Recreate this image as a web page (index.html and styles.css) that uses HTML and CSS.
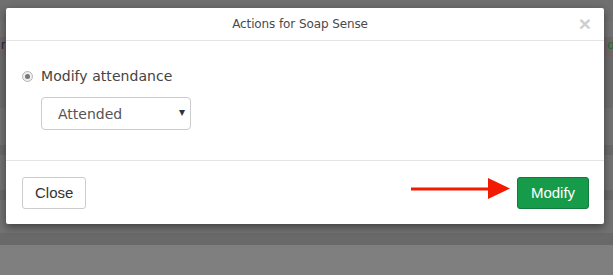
FILE: index.html
```html
<!DOCTYPE html>
<html>
<head>
<meta charset="utf-8">
<link rel="stylesheet" href="styles.css">
</head>
<body>
<div class="page">
  <div class="band b1"></div>
  <div class="band b2"></div>
  <div class="band b3"><span class="cut-l">r</span><span class="cut-r">o</span></div>
  <div class="band b4"></div>
  <div class="band b5"></div>
  <div class="band b6"></div>
  <div class="band b5 h35"></div>
  <div class="band b6"></div>
  <div class="band b5 h33"></div>
  <div class="band b6 h12"></div>
  <div class="band b7"></div>
</div>

<div class="modal">
  <div class="modal-header">
    <span class="modal-title">Actions for Soap Sense</span>
    <span class="close-x">×</span>
  </div>
  <div class="modal-body">
    <label class="radio-row">
      <span class="radio"><span class="dot"></span></span>
      <span class="radio-label">Modify attendance</span>
    </label>
    <div class="select">
      <span>Attended</span>
      <span class="caret">▾</span>
    </div>
  </div>
  <div class="modal-footer">
    <button class="btn btn-default">Close</button>
    <svg class="arrow" width="100" height="22" viewBox="0 0 100 22">
      <rect x="0" y="9.5" width="80" height="3" fill="#f21a00"/>
      <polygon points="77,0 99,10.5 77,21" fill="#f21a00"/>
    </svg>
    <button class="btn btn-success">Modify</button>
  </div>
</div>
</body>
</html>
```
FILE: styles.css
```css
html, body {
  margin: 0;
  padding: 0;
}
body {
  width: 613px;
  height: 275px;
  overflow: hidden;
  position: relative;
  font-family: "DejaVu Sans", "Noto Sans", sans-serif;
}
.page {
  display: flex;
  flex-direction: column;
  height: 275px;
}
.band { flex: none; }
.b1 { height: 21px; background: #6f6f6f; }
.b2 { height: 16px; background: #727272; }
.b3 {
  height: 20px;
  background: #716767;
  display: flex;
  justify-content: space-between;
  align-items: center;
  font-family: "Liberation Sans", sans-serif;
  font-size: 13px;
  line-height: 20px;
}
.cut-l { color: #1c2a44; margin-left: 1px; margin-top: -4px; }
.cut-r { color: #1d6b35; margin-right: -1px; margin-top: -4px; font-size: 12px; }
.b4 { height: 51px; background: #6c6c6c; }
.b5 { height: 37px; background: #727272; }
.b6 { height: 10px; background: #696969; }
.h35 { height: 35px; }
.h33 { height: 33px; }
.h12 { height: 12px; }
.b7 { flex: 1; background: #7f7f7f; }

.modal {
  position: absolute;
  left: 6px;
  top: 8px;
  width: 598px;
  height: 216px;
  background: #fff;
  border-radius: 2px;
  box-shadow: 0 3px 9px rgba(0, 0, 0, 0.45);
  display: flex;
  flex-direction: column;
}
.modal-header {
  height: 32px;
  border-bottom: 1px solid #e5e5e5;
  display: flex;
  align-items: center;
  justify-content: center;
  position: relative;
}
.modal-title {
  font-size: 12px;
  color: #4a4a4a;
  letter-spacing: -0.1px;
  margin-left: -10px;
}
.close-x {
  position: absolute;
  right: 13px;
  top: 5px;
  font-family: "Liberation Sans", sans-serif;
  font-size: 21px;
  font-weight: bold;
  color: #cfcfcf;
  line-height: 21px;
}
.modal-body {
  height: 119px;
  box-sizing: border-box;
  padding: 24px 0 0 16px;
  display: flex;
  flex-direction: column;
  align-items: flex-start;
}
.radio-row {
  display: flex;
  align-items: center;
  gap: 8px;
  height: 22px;
}
.radio {
  width: 11px;
  height: 11px;
  box-sizing: border-box;
  border: 1px solid #b5b5b5;
  border-radius: 50%;
  background: #eee;
  display: flex;
  align-items: center;
  justify-content: center;
}
.dot {
  width: 5px;
  height: 5px;
  border-radius: 50%;
  background: #777;
}
.radio-label {
  font-size: 14px;
  color: #444;
  letter-spacing: 0.05px;
}
.select {
  margin: 10px 0 0 19px;
  width: 150px;
  height: 33px;
  box-sizing: border-box;
  border: 1px solid #ccc;
  border-radius: 4px;
  display: flex;
  align-items: center;
  justify-content: space-between;
  padding: 0 5px 0 16px;
  font-size: 14px;
  color: #555;
}
.caret {
  font-size: 12px;
  color: #333;
  margin-top: -3px;
}
.modal-footer {
  flex: 1;
  border-top: 1px solid #e5e5e5;
  display: flex;
  align-items: center;
  padding: 0 15px 0 16px;
  position: relative;
}
.btn {
  height: 32px;
  box-sizing: border-box;
  border-radius: 3px;
  font-family: "Liberation Sans", sans-serif;
  font-size: 15px;
  padding: 0 12px;
  margin: 0;
}
.btn-default {
  width: 64px;
  background: #fff;
  border: 1px solid #ccc;
  color: #333;
}
.btn-success {
  width: 72px;
  margin-left: auto;
  background: #159b4a;
  border: 1px solid #0f7c3a;
  color: #fff;
}
.arrow {
  position: absolute;
  left: 405px;
  top: 17px;
}
```
